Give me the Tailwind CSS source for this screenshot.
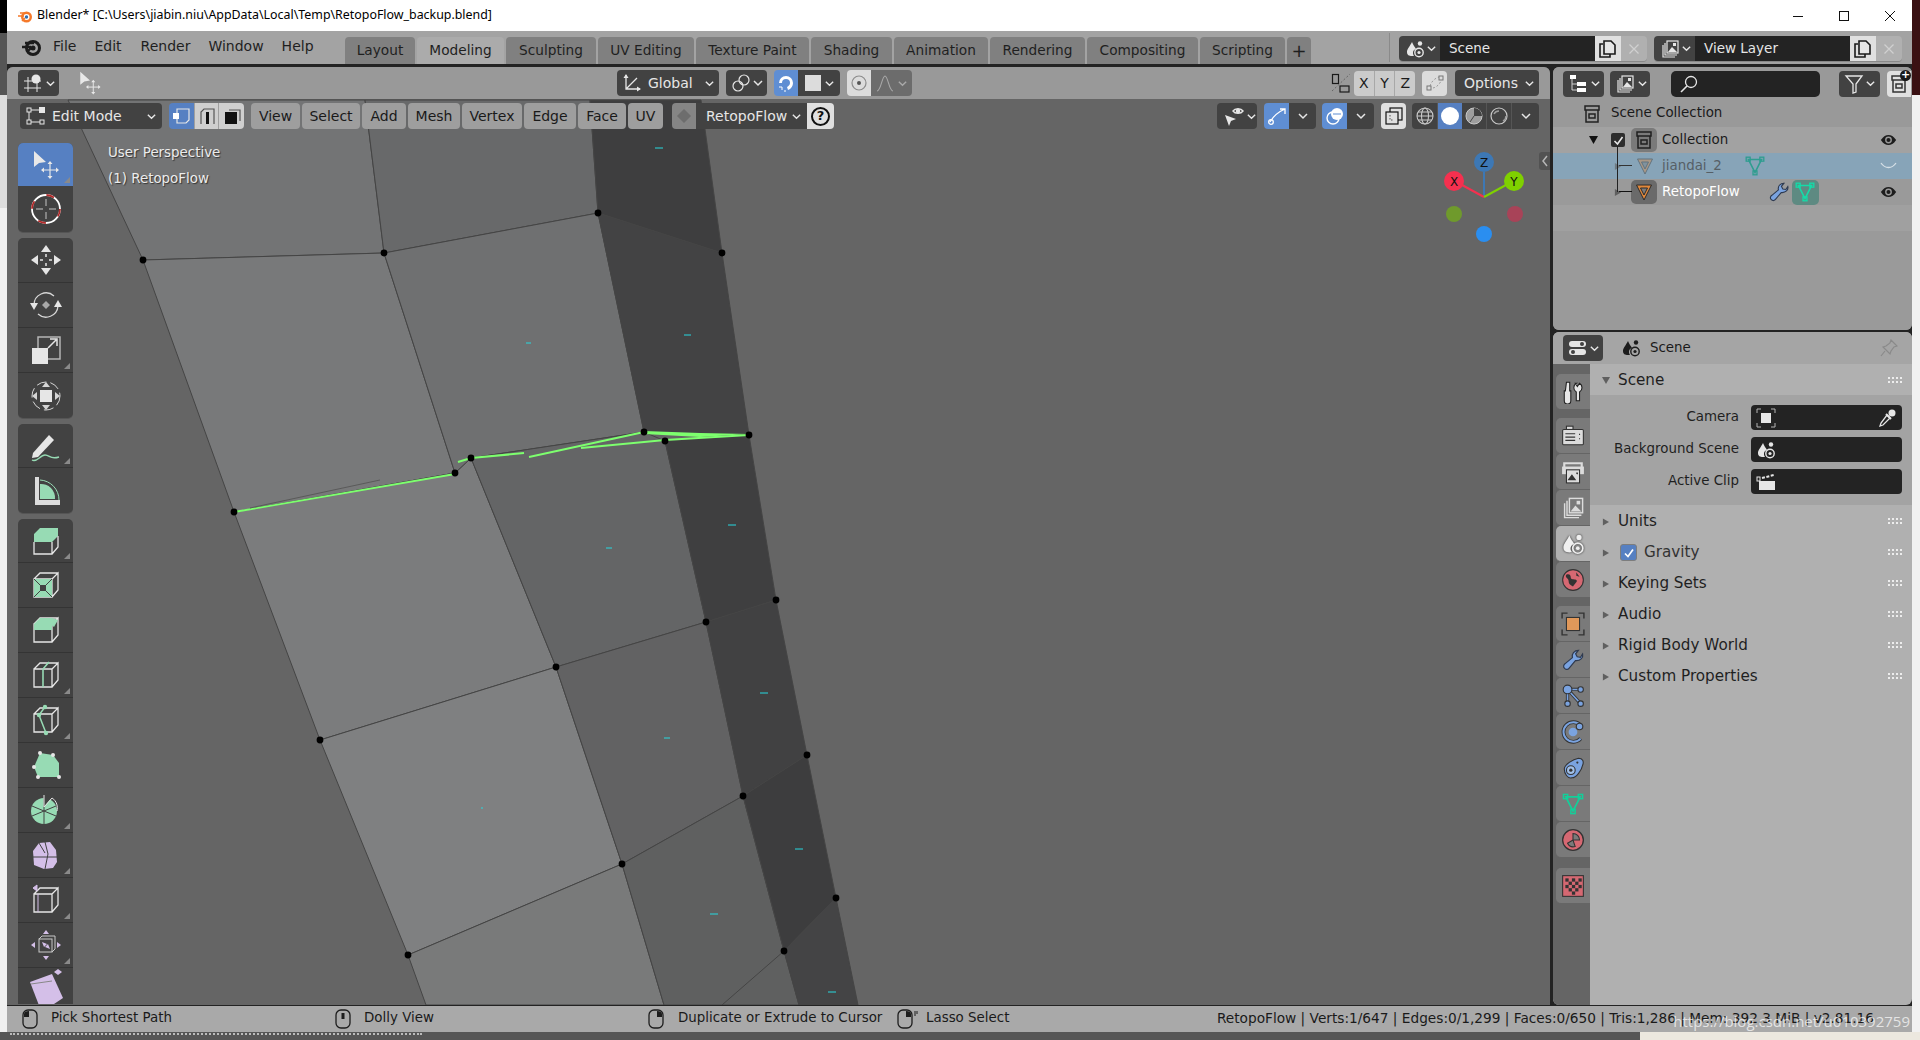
<!DOCTYPE html>
<html lang="en">
<head>
  <meta charset="UTF-8" />
  <title>Blender</title>
  <script src="https://cdn.jsdelivr.net/npm/@tailwindcss/browser@4"></script>
</head>
<body class="w-[1920px] h-[1040px] overflow-hidden bg-[#e9e6df] font-['DejaVu_Sans',sans-serif] text-[13.4px] text-[#1a1a1a]">

  <!-- shared icons -->
  <svg class="hidden">
    <symbol id="chev" viewBox="0 0 12 12"><path d="M2 4l4 4 4-4" fill="none" stroke="currentColor" stroke-width="1.5"/></symbol>
    <symbol id="corner" viewBox="0 0 7 7"><polygon points="7,0 7,7 0,7" fill="#8a8a8a"/></symbol>
    <symbol id="sceneicon" viewBox="0 0 20 20">
      <path d="M7 3C5 7 2 10 2 13c0 3 2 4 5 4 1 0 2-.3 2-.3C7 14 8 11 11 10 10 8 8 6 7 3z" fill="currentColor"/>
      <circle cx="15" cy="4.5" r="2.2" fill="currentColor"/>
      <circle cx="14" cy="13.5" r="4.2" fill="none" stroke="currentColor" stroke-width="1.4"/>
      <circle cx="14" cy="13.5" r="1.6" fill="currentColor"/>
    </symbol>
    <symbol id="layers" viewBox="0 0 20 20">
      <path d="M3 6v12h12" fill="none" stroke="currentColor" stroke-width="1.2"/>
      <path d="M5 4v12h12" fill="none" stroke="currentColor" stroke-width="1.2"/>
      <rect x="7" y="2" width="11" height="12" fill="none" stroke="currentColor" stroke-width="1.2"/>
      <path d="M8 13l4-5 2 2 3 3z" fill="currentColor"/><rect x="13" y="4" width="3" height="3" fill="currentColor"/>
    </symbol>
    <symbol id="copy" viewBox="0 0 20 20">
      <path d="M5 5H2v13h10v-3" fill="none" stroke="#1a1a1a" stroke-width="1.6"/>
      <path d="M6 2h7l4 4v9H6z" fill="#e6e6e6" stroke="#1a1a1a" stroke-width="1.6"/>
    </symbol>
    <symbol id="x" viewBox="0 0 12 12"><path d="M1.5 1.5l9 9M10.5 1.5l-9 9" stroke="currentColor" stroke-width="1.3"/></symbol>
    <symbol id="eye" viewBox="0 0 20 14"><path d="M1 7c3-4.5 6-6 9-6s6 1.5 9 6c-3 4.5-6 6-9 6s-6-1.5-9-6z" fill="#1d1d1d"/><circle cx="10" cy="7" r="4" fill="#9a9a9a"/><circle cx="10" cy="7" r="2.4" fill="#1d1d1d"/></symbol>
    <symbol id="meshicon" viewBox="0 0 20 20">
      <path d="M4 4h12L10 16z" fill="none" stroke="currentColor" stroke-width="1.4"/>
      <g fill="none" stroke="currentColor" stroke-width="1.2"><rect x="2" y="2" width="3.6" height="3.6"/><rect x="14.400" y="2" width="3.6" height="3.6"/><rect x="8.200" y="14.400" width="3.6" height="3.6"/></g>
    </symbol>
    <symbol id="objicon" viewBox="0 0 20 20">
      <path d="M2.5 3h15L10 18z" fill="#e0883c" stroke="#2b2b2b" stroke-width="1"/>
      <path d="M6.500 6h7L10 13z" fill="#7a7a7a" stroke="#2b2b2b" stroke-width="1"/>
    </symbol>
    <symbol id="collicon" viewBox="0 0 20 20">
      <path d="M3 2h14v4H3zM4 6v12h12V6" fill="none" stroke="currentColor" stroke-width="1.5"/>
      <rect x="7" y="10" width="6" height="4" fill="none" stroke="currentColor" stroke-width="1.5"/>
    </symbol>
    <symbol id="wrench" viewBox="0 0 20 20">
      <path d="M3 17c-1.5-1.500-.8-3 .5-4l6-5c-.8-3 1.500-6 5-6l-2.300 2.800 1.300 2.500 2.700.4L18 5c.8 3-2 6-6 5.500l-5 6c-1 1.300-2.500 2-4 .5z" fill="#7aa3e0" stroke="#2f3a4f" stroke-width="1"/>
    </symbol>
    <symbol id="grip" viewBox="0 0 14 7"><g fill="#ededed"><rect x="0" y="0" width="2" height="2"/><rect x="4" y="0" width="2" height="2"/><rect x="8" y="0" width="2" height="2"/><rect x="12" y="0" width="2" height="2"/><rect x="0" y="4" width="2" height="2"/><rect x="4" y="4" width="2" height="2"/><rect x="8" y="4" width="2" height="2"/><rect x="12" y="4" width="2" height="2"/></g></symbol>
    <symbol id="tri" viewBox="0 0 8 8"><polygon points="1,0 8,4 1,8" fill="#5f5f5f"/></symbol>
    <symbol id="cube" viewBox="0 0 32 32"><path d="M4 10h18v18H4zM22 28l6-7V4l-6 6M4 10l6-6h18" fill="none" stroke="#e6e6e6" stroke-width="1.300"/></symbol>
    <symbol id="selectmove" viewBox="0 0 32 32">
      <polygon points="4,2 4,18 9,14 16,13" fill="#e8e8e8"/>
      <path d="M20 14v14M13 21h14" stroke="#e8e8e8" stroke-width="1.200" fill="none"/>
      <path d="M20 12l2.500 3h-5zM20 30l2.500-3h-5zM11 21l3 2.500v-5zM29 21l-3 2.500v-5z" fill="#e8e8e8"/>
    </symbol>
  </svg>

  <div class="flex h-[1032px]">
    <!-- desktop behind the window, left -->
    <div class="w-[7px] flex flex-col">
      <div class="h-[33px] bg-black"></div>
      <div class="h-[62px] bg-[#555555]"></div>
      <div class="h-[113px] bg-[#dddddd]"></div>
      <div class="flex-1 bg-[#f0f0f0]"></div>
    </div>

    <div class="w-[1905px] flex flex-col">
      <!-- title bar -->
      <div class="h-[31px] bg-white flex items-center pl-[10px] text-black">
        <svg class="w-[16px] h-[16px]" viewBox="0 0 16 16"><circle cx="9.500" cy="9" r="5.500" fill="#f5792a"/><circle cx="9.500" cy="9" r="3" fill="#fff"/><circle cx="9.500" cy="9" r="1.700" fill="#2f6fb0"/><path d="M1 8h6M3 5h6M5 13l3-3" stroke="#f5792a" stroke-width="1.600"/></svg>
        <span class="ml-[4px] font-['Noto_Sans',sans-serif] text-[12.4px] whitespace-nowrap">Blender* [C:\Users\jiabin.niu\AppData\Local\Temp\RetopoFlow_backup.blend]</span>
        <div class="ml-auto flex items-center text-[#111111]">
          <svg class="w-[46px] h-[12px]" viewBox="0 0 46 12"><path d="M18 6.500h10" stroke="currentColor" stroke-width="1"/></svg>
          <svg class="w-[46px] h-[12px]" viewBox="0 0 46 12"><rect x="18.500" y="1.500" width="9" height="9" fill="none" stroke="currentColor"/></svg>
          <svg class="w-[46px] h-[12px] mr-[-1px]" viewBox="0 0 46 12"><path d="M18 1l10 10M28 1L18 11" stroke="currentColor"/></svg>
        </div>
      </div>

      <!-- top bar: menus, workspace tabs, scene and view layer -->
      <div class="h-[33px] bg-[#a3a3a3] flex text-[#1f1f1f]">
        <div class="flex items-center w-[338px] shrink-0 pb-[2px] text-[14px]">
          <svg class="w-[22px] h-[20px] ml-[13px] text-[#1c1c1c]" viewBox="0 0 22 20"><circle cx="13" cy="11" r="6.500" fill="none" stroke="currentColor" stroke-width="3"/><circle cx="13" cy="11" r="2.500" fill="currentColor"/><path d="M2 10h9M5 6h9M7 15l4-4" stroke="currentColor" stroke-width="2.400"/></svg>
          <span class="ml-[11px]">File</span>
          <span class="ml-[18px]">Edit</span>
          <span class="ml-[19px]">Render</span>
          <span class="ml-[18px]">Window</span>
          <span class="ml-[18px]">Help</span>
        </div>
        <div class="flex items-end h-full text-[13.7px] gap-[2px]">
          <div class="w-[70px] h-[27px] bg-[#808080] rounded-t-[4px] flex items-center justify-center">Layout</div>
          <div class="w-[87px] h-[27px] bg-[#ababab] rounded-t-[4px] flex items-center justify-center">Modeling</div>
          <div class="w-[90px] h-[27px] bg-[#808080] rounded-t-[4px] flex items-center justify-center">Sculpting</div>
          <div class="w-[96px] h-[27px] bg-[#808080] rounded-t-[4px] flex items-center justify-center">UV Editing</div>
          <div class="w-[113px] h-[27px] bg-[#808080] rounded-t-[4px] flex items-center justify-center">Texture Paint</div>
          <div class="w-[81px] h-[27px] bg-[#808080] rounded-t-[4px] flex items-center justify-center">Shading</div>
          <div class="w-[94px] h-[27px] bg-[#808080] rounded-t-[4px] flex items-center justify-center">Animation</div>
          <div class="w-[95px] h-[27px] bg-[#808080] rounded-t-[4px] flex items-center justify-center">Rendering</div>
          <div class="w-[111px] h-[27px] bg-[#808080] rounded-t-[4px] flex items-center justify-center">Compositing</div>
          <div class="w-[85px] h-[27px] bg-[#808080] rounded-t-[4px] flex items-center justify-center">Scripting</div>
          <div class="w-[24px] h-[27px] bg-[#808080] rounded-t-[4px] flex items-center justify-center text-[18px]">+</div>
        </div>
        <div class="w-[1px] h-[29px] mt-[2px] bg-[#8a8a8a] ml-[78px]"></div>
        <div class="flex h-[25px] mt-[5px] ml-[9px] w-[248px] rounded-[4px] overflow-hidden shadow-[0_1px_0_#888]">
          <div class="w-[41px] bg-[#424242] text-[#e6e6e6] flex items-center pl-[6px]">
            <svg class="w-[20px] h-[20px]"><use href="#sceneicon"/></svg>
            <svg class="w-[11px] h-[11px] ml-[1px]"><use href="#chev"/></svg>
          </div>
          <div class="w-[155px] bg-[#232323] text-[#e6e6e6] flex items-center pl-[9px] text-[13.5px]">Scene</div>
          <div class="w-[26px] bg-[#e0e0e0] flex items-center justify-center"><svg class="w-[20px] h-[20px]"><use href="#copy"/></svg></div>
          <div class="w-[26px] bg-[#b0b0b0] text-[#d0d0d0] flex items-center justify-center"><svg class="w-[12px] h-[12px]"><use href="#x"/></svg></div>
        </div>
        <div class="flex h-[25px] mt-[5px] ml-[7px] w-[248px] rounded-[4px] overflow-hidden shadow-[0_1px_0_#888]">
          <div class="w-[41px] bg-[#424242] text-[#e6e6e6] flex items-center pl-[6px]">
            <svg class="w-[20px] h-[20px]"><use href="#layers"/></svg>
            <svg class="w-[11px] h-[11px] ml-[1px]"><use href="#chev"/></svg>
          </div>
          <div class="w-[155px] bg-[#232323] text-[#e6e6e6] flex items-center pl-[9px] text-[13.5px]">View Layer</div>
          <div class="w-[26px] bg-[#e0e0e0] flex items-center justify-center"><svg class="w-[20px] h-[20px]"><use href="#copy"/></svg></div>
          <div class="w-[26px] bg-[#b0b0b0] text-[#d0d0d0] flex items-center justify-center"><svg class="w-[12px] h-[12px]"><use href="#x"/></svg></div>
        </div>
      </div>

      <!-- editors -->
      <div class="flex-1 min-h-0 bg-[#232323] pt-[3px] flex gap-[3px]">

        <!-- 3D viewport -->
        <div class="w-[1543px] shrink-0 flex flex-col rounded-t-[6px] overflow-hidden bg-[#656565]">
          <!-- tool header -->
          <div class="h-[32px] shrink-0 bg-[#999999] flex items-center relative z-10 text-[#e6e6e6]">
            <div class="ml-[11px] w-[41px] h-[26px] bg-[#424242] rounded-[4px] flex items-center pl-[5px]">
              <svg class="w-[22px] h-[22px]" viewBox="0 0 22 22"><path d="M1 9h17M1 16h17M5 5v15M14 5v15" stroke="#e6e6e6" stroke-width="1" fill="none"/><circle cx="13" cy="7" r="4.500" fill="#e6e6e6"/></svg>
              <svg class="w-[11px] h-[11px]"><use href="#chev"/></svg>
            </div>
            <svg class="ml-[18px] w-[26px] h-[26px]"><use href="#selectmove"/></svg>
            <div class="ml-[514px] w-[102px] h-[26px] bg-[#424242] rounded-[4px] flex items-center pl-[5px]">
              <svg class="w-[20px] h-[20px]" viewBox="0 0 20 20"><path d="M4 2v14h14M4 16L15 5" fill="none" stroke="#e6e6e6" stroke-width="1.300"/><path d="M4 1l-2.500 4h5zM19 16l-4-2.500v5z" fill="#e6e6e6"/></svg>
              <span class="ml-[6px] text-[14px]">Global</span>
              <svg class="ml-auto mr-[4px] w-[11px] h-[11px]"><use href="#chev"/></svg>
            </div>
            <div class="ml-[7px] w-[41px] h-[26px] bg-[#424242] rounded-[4px] flex items-center pl-[5px]">
              <svg class="w-[20px] h-[20px]" viewBox="0 0 20 20"><circle cx="7" cy="13" r="5" fill="none" stroke="#e6e6e6" stroke-width="1.200"/><circle cx="13" cy="7" r="5" fill="none" stroke="#e6e6e6" stroke-width="1.200"/></svg>
              <svg class="w-[12px] h-[12px] ml-[1px]"><use href="#chev"/></svg>
            </div>
            <div class="ml-[7px] w-[66px] h-[26px] rounded-[4px] overflow-hidden flex">
              <div class="w-[24px] bg-[#5f8ed3] flex items-center justify-center">
                <svg class="w-[20px] h-[20px]" viewBox="0 0 20 20"><path d="M3 10a7 7 0 1 1 14 0c0 3-2 6-5 7l-1-3c1-.5 3-2 3-4a4 4 0 0 0-8 0z" fill="#fff"/><path d="M3 14h3v3M8 18h2" stroke="#fff" fill="none"/></svg>
              </div>
              <div class="flex-1 bg-[#424242] flex items-center pl-[7px]">
                <div class="w-[16px] h-[16px] bg-[#dcdcdc]"></div>
                <svg class="w-[11px] h-[11px] ml-[3px]"><use href="#chev"/></svg>
              </div>
            </div>
            <div class="ml-[7px] w-[65px] h-[26px] rounded-[4px] overflow-hidden flex">
              <div class="w-[24px] bg-[#dcdcdc] flex items-center justify-center">
                <svg class="w-[18px] h-[18px]" viewBox="0 0 18 18"><circle cx="9" cy="9" r="7" fill="none" stroke="#8c8c8c" stroke-width="1.200"/><circle cx="9" cy="9" r="2" fill="#555"/></svg>
              </div>
              <div class="flex-1 bg-[#6c6c6c] flex items-center pl-[5px] text-[#a8a8a8]">
                <svg class="w-[18px] h-[20px]" viewBox="0 0 18 20"><path d="M1 18c4 0 5-15 8-15s4 15 8 15" fill="none" stroke="#a8a8a8" stroke-width="1.100"/></svg>
                <svg class="w-[11px] h-[11px] ml-[3px]"><use href="#chev"/></svg>
              </div>
            </div>
            <svg class="ml-[419px] w-[20px] h-[20px]" viewBox="0 0 20 20"><rect x="1.500" y="1.500" width="6" height="9" fill="none" stroke="#1a1a1a" stroke-width="1.200"/><rect x="9" y="13" width="9" height="6" fill="none" stroke="#1a1a1a" stroke-width="1.200"/><path d="M1 18L19 1" stroke="#666" stroke-dasharray="2 2"/></svg>
            <div class="ml-[3px] w-[61px] h-[25px] bg-[#cbcbcb] rounded-[4px] flex text-[#1a1a1a] text-[14px]">
              <span class="flex-1 flex items-center justify-center border-r border-[#a8a8a8]">X</span>
              <span class="flex-1 flex items-center justify-center border-r border-[#a8a8a8]">Y</span>
              <span class="flex-1 flex items-center justify-center">Z</span>
            </div>
            <div class="ml-[7px] w-[25px] h-[25px] bg-[#dcdcdc] rounded-[4px] flex items-center justify-center">
              <svg class="w-[20px] h-[20px]" viewBox="0 0 20 20"><path d="M5 13C6 9 10 5 14 4" fill="none" stroke="#9a9a9a" stroke-dasharray="2 2"/><path d="M8 15c3-.5 6-3 8-7" fill="none" stroke="#9a9a9a" stroke-dasharray="2 2"/><rect x="2" y="13" width="4" height="4" fill="none" stroke="#777"/><rect x="14" y="3" width="4" height="4" fill="none" stroke="#777"/></svg>
            </div>
            <div class="ml-[8px] w-[84px] h-[26px] bg-[#424242] rounded-[4px] flex items-center pl-[9px] text-[14px]">
              Options
              <svg class="ml-auto mr-[4px] w-[11px] h-[11px]"><use href="#chev"/></svg>
            </div>
          </div>

          <!-- viewport canvas -->
          <div class="relative flex-1 min-h-0">
            <!-- mesh, page coordinates -->
            <svg class="absolute inset-0 w-full h-full" viewBox="7 99 1543 906">
              <g stroke="#454545" stroke-width="1">
                <polygon points="68,100 365,100 384,253 143,260" fill="#737475"/>
                <polygon points="143,260 384,253 455,473 234,512" fill="#78797a"/>
                <polygon points="234,512 455,473 471,458 556,667 320,740" fill="#7b7c7d"/>
                <polygon points="320,740 556,667 622,864 408,955" fill="#7f8081"/>
                <polygon points="408,955 622,864 664,1005 426,1005" fill="#797a7a"/>
                <polygon points="365,100 590,100 598,213 384,253" fill="#68696a"/>
                <polygon points="384,253 598,213 644,432 471,458 455,473" fill="#6f7071"/>
                <polygon points="471,458 644,432 665,441 706,622 556,667" fill="#646566"/>
                <polygon points="556,667 706,622 743,796 622,864" fill="#626263"/>
                <polygon points="622,864 743,796 784,951 799,1005 664,1005" fill="#5f6060"/>
                <polygon points="590,100 701,100 722,253 598,213" fill="#3e3e3f"/>
                <polygon points="598,213 722,253 749,435 644,432" fill="#434344"/>
                <polygon points="665,441 749,435 776,600 706,622" fill="#3f3f40"/>
                <polygon points="706,622 776,600 807,755 743,796" fill="#414142"/>
                <polygon points="743,796 807,755 836,898 784,951" fill="#3d3d3e"/>
                <polygon points="784,951 836,898 858,1005 799,1005" fill="#444445"/>
                <path d="M784 951L722 1005" fill="none"/>
              </g>
              <!-- selected edge path -->
              <g stroke="#7dff6e" stroke-width="1.800" fill="none">
                <path d="M234 512L455 474"/>
                <path d="M458 462L471 458L524 453" stroke-width="2.200"/>
                <path d="M529 457L644 432"/>
                <path d="M581 448L665 440L749 435"/>
              </g>
              <polygon points="644,431 700,433 749,434 700,437 644,434" fill="#7dff6e"/>
              <path d="M250 508L380 480" stroke="#5a5a5a" fill="none"/>
              <!-- normals -->
              <g stroke="#27d9e0" stroke-width="1" fill="none">
                <path d="M655 148h8M684 335h7M526 343h5M728 525h8M606 548h6M760 693h8M664 738h6M795 849h8M710 914h8M828 992h8M481 808h2"/>
              </g>
              <g fill="#000">
                <circle cx="143" cy="260" r="3.400"/><circle cx="384" cy="253" r="3.400"/><circle cx="598" cy="213" r="3.400"/><circle cx="722" cy="253" r="3.400"/>
                <circle cx="234" cy="512" r="3.400"/><circle cx="455" cy="473" r="3.400"/><circle cx="471" cy="458" r="3.400"/><circle cx="644" cy="432" r="3.400"/><circle cx="665" cy="441" r="3.400"/><circle cx="749" cy="435" r="3.400"/>
                <circle cx="320" cy="740" r="3.400"/><circle cx="556" cy="667" r="3.400"/><circle cx="706" cy="622" r="3.400"/><circle cx="776" cy="600" r="3.400"/>
                <circle cx="408" cy="955" r="3.400"/><circle cx="622" cy="864" r="3.400"/><circle cx="743" cy="796" r="3.400"/><circle cx="807" cy="755" r="3.400"/>
                <circle cx="784" cy="951" r="3.400"/><circle cx="836" cy="898" r="3.400"/>
              </g>
              <!-- navigation gizmo -->
              <path d="M1484 197V172" stroke="#3d78b5" stroke-width="2"/>
              <path d="M1484 197L1462 185" stroke="#f5304f" stroke-width="2"/>
              <path d="M1484 197L1506 185" stroke="#7fd100" stroke-width="2"/>
              <circle cx="1484" cy="162" r="10" fill="#3d78b5"/>
              <circle cx="1454" cy="181" r="10" fill="#f5304f"/>
              <circle cx="1514" cy="181" r="10" fill="#7fd100"/>
              <circle cx="1454" cy="214" r="8" fill="#6f9a2c"/>
              <circle cx="1515" cy="214" r="8" fill="#a84358"/>
              <circle cx="1484" cy="234" r="8" fill="#2a8ef0"/>
              <g fill="#101010" font-family="DejaVu Sans" font-size="12" text-anchor="middle">
                <text x="1484" y="166.500">Z</text><text x="1454" y="185.500">X</text><text x="1514" y="185.500">Y</text>
              </g>
            </svg>

            <!-- header overlay -->
            <div class="absolute top-[4px] left-[13px] right-[10px] h-[26px] flex text-[#e6e6e6]">
              <div class="w-[142px] bg-[#424242] rounded-[4px] flex items-center pl-[6px] text-[14px]">
                <svg class="w-[20px] h-[20px]" viewBox="0 0 20 20"><rect x="1" y="2" width="4" height="4" fill="none" stroke="#e6e6e6"/><rect x="13" y="1" width="6" height="6" fill="#e6e6e6"/><rect x="1" y="14" width="4" height="4" fill="none" stroke="#e6e6e6"/><rect x="14" y="14" width="4" height="4" fill="none" stroke="#e6e6e6"/><path d="M5 4h8M3 6v8M5 16h9" stroke="#e6e6e6"/></svg>
                <span class="ml-[6px]">Edit Mode</span>
                <svg class="ml-auto mr-[5px] w-[11px] h-[11px]"><use href="#chev"/></svg>
              </div>
              <div class="ml-[7px] w-[75px] rounded-[4px] overflow-hidden flex">
                <div class="w-[25px] bg-[#5680c2] flex items-center justify-center"><svg class="w-[20px] h-[20px]" viewBox="0 0 20 20"><path d="M5 3h12v11l-3 3H5z" fill="none" stroke="#e6e6e6" stroke-width="1.200"/><rect x="1" y="7" width="6" height="6" fill="#fff"/></svg></div>
                <div class="w-[25px] bg-[#cfcfcf] border-x border-[#9f9f9f] flex items-center justify-center"><svg class="w-[20px] h-[20px]" viewBox="0 0 20 20"><path d="M4 18V6l3-3h10v15" fill="none" stroke="#555" stroke-width="1.200"/><rect x="9" y="6" width="3" height="12" fill="#111"/></svg></div>
                <div class="w-[25px] bg-[#cfcfcf] flex items-center justify-center"><svg class="w-[20px] h-[20px]" viewBox="0 0 20 20"><path d="M7 4h11v11" fill="none" stroke="#555" stroke-width="1.200"/><rect x="3" y="6" width="12" height="12" fill="#111"/></svg></div>
              </div>
              <div class="ml-[7px] flex gap-[2px] text-[#1a1a1a] text-[14px]">
                <div class="w-[49px] bg-[#9e9e9e] rounded-[4px] flex items-center justify-center">View</div>
                <div class="w-[58px] bg-[#9e9e9e] rounded-[4px] flex items-center justify-center">Select</div>
                <div class="w-[44px] bg-[#9e9e9e] rounded-[4px] flex items-center justify-center">Add</div>
                <div class="w-[52px] bg-[#9e9e9e] rounded-[4px] flex items-center justify-center">Mesh</div>
                <div class="w-[60px] bg-[#9e9e9e] rounded-[4px] flex items-center justify-center">Vertex</div>
                <div class="w-[52px] bg-[#9e9e9e] rounded-[4px] flex items-center justify-center">Edge</div>
                <div class="w-[48px] bg-[#9e9e9e] rounded-[4px] flex items-center justify-center">Face</div>
                <div class="w-[35px] bg-[#9e9e9e] rounded-[4px] flex items-center justify-center">UV</div>
              </div>
              <div class="ml-[9px] flex w-[162px] rounded-[4px] overflow-hidden">
                <div class="w-[24px] bg-[#858585] flex items-center justify-center"><svg class="w-[16px] h-[16px]" viewBox="0 0 16 16"><polygon points="8,1 15,8 8,15 1,8" fill="#6d6d6d"/></svg></div>
                <div class="w-[111px] bg-[#424242] flex items-center pl-[10px] text-[14px]">RetopoFlow<svg class="ml-auto mr-[5px] w-[11px] h-[11px]"><use href="#chev"/></svg></div>
                <div class="w-[27px] bg-[#e0e0e0] flex items-center justify-center">
                  <span class="w-[19px] h-[19px] rounded-full border-2 border-[#111111] text-[#111111] font-bold text-[13px] flex items-center justify-center">?</span>
                </div>
              </div>
              <div class="ml-[383px] w-[40px] bg-[#424242] rounded-[4px] flex items-center pl-[5px]">
                <svg class="w-[24px] h-[24px]" viewBox="0 0 24 24"><path d="M11 7c2-3 8-3 10 0-2 3-8 3-10 0z" fill="none" stroke="#e6e6e6" stroke-width="1.400"/><circle cx="16" cy="7" r="2.300" fill="#e6e6e6"/><polygon points="3,11 14,15 9,17 7,22" fill="#e6e6e6"/></svg>
                <svg class="w-[11px] h-[11px]"><use href="#chev"/></svg>
              </div>
              <div class="ml-[7px] w-[52px] rounded-[4px] overflow-hidden flex">
                <div class="w-[25px] bg-[#5f8ed3] flex items-center justify-center"><svg class="w-[22px] h-[22px]" viewBox="0 0 22 22"><path d="M4 17C8 10 12 7 19 4M14 4h5v5" fill="none" stroke="#fff" stroke-width="1.300"/><circle cx="5" cy="17" r="2.300" fill="none" stroke="#fff" stroke-width="1.300"/></svg></div>
                <div class="flex-1 bg-[#424242] flex items-center justify-center"><svg class="w-[12px] h-[12px]"><use href="#chev"/></svg></div>
              </div>
              <div class="ml-[6px] w-[52px] rounded-[4px] overflow-hidden flex">
                <div class="w-[25px] bg-[#5f8ed3] flex items-center justify-center"><svg class="w-[22px] h-[22px]" viewBox="0 0 22 22"><circle cx="13" cy="9" r="6" fill="#fff"/><circle cx="9" cy="13" r="6" fill="none" stroke="#fff" stroke-width="1.400"/><path d="M9 9l8 0" stroke="#5f8ed3" stroke-width="1.200"/></svg></div>
                <div class="flex-1 bg-[#424242] flex items-center justify-center"><svg class="w-[12px] h-[12px]"><use href="#chev"/></svg></div>
              </div>
              <div class="ml-[7px] w-[25px] bg-[#e0e0e0] rounded-[4px] flex items-center justify-center">
                <svg class="w-[20px] h-[20px]" viewBox="0 0 20 20"><rect x="6" y="2" width="12" height="12" fill="none" stroke="#111" stroke-width="1.200"/><rect x="2" y="6" width="12" height="12" fill="#e0e0e0" stroke="#111" stroke-width="1.200"/><path d="M6 9v5h4" fill="none" stroke="#555" stroke-dasharray="1.500 1.500"/></svg>
              </div>
              <div class="ml-[6px] w-[127px] rounded-[4px] overflow-hidden flex bg-[#424242]">
                <div class="w-[26px] flex items-center justify-center border-r border-[#555555]"><svg class="w-[20px] h-[20px]" viewBox="0 0 20 20"><g fill="none" stroke="#c9c9c9" stroke-width="1.100"><circle cx="10" cy="10" r="8"/><ellipse cx="10" cy="10" rx="3.500" ry="8"/><path d="M2 10h16M3 6h14M3 14h14"/></g></svg></div>
                <div class="w-[24px] bg-[#5680c2] flex items-center justify-center"><div class="w-[18px] h-[18px] rounded-full bg-white"></div></div>
                <div class="w-[25px] flex items-center justify-center border-r border-[#555555]"><svg class="w-[20px] h-[20px]" viewBox="0 0 20 20"><circle cx="10" cy="10" r="8" fill="#9e9e9e" stroke="#c9c9c9"/><path d="M10 2v8h8a8 8 0 0 0-8-8z" fill="#424242"/><path d="M10 10l-4 6" stroke="#424242"/></svg></div>
                <div class="w-[25px] flex items-center justify-center border-r border-[#555555]"><svg class="w-[20px] h-[20px]" viewBox="0 0 20 20"><circle cx="10" cy="10" r="8" fill="none" stroke="#c9c9c9" stroke-width="1.200"/><path d="M5 8c1-2 3-3 5-3M14 15c2-1 3-3 3-5" fill="none" stroke="#9e9e9e" stroke-width="1.500"/></svg></div>
                <div class="flex-1 flex items-center justify-center"><svg class="w-[12px] h-[12px]"><use href="#chev"/></svg></div>
              </div>
            </div>

            <div class="absolute top-[41px] left-[101px] text-[#ececec] [text-shadow:1px_1px_1px_#333] leading-[26px]">
              <div>User Perspective</div>
              <div>(1) RetopoFlow</div>
            </div>

            <div class="absolute top-[53px] right-0 w-[11px] h-[18px] bg-[#525252] rounded-l-[3px] flex items-center justify-center">
              <svg class="w-[8px] h-[12px]" viewBox="0 0 8 12"><path d="M6 1L2 6l4 5" fill="none" stroke="#b5b5b5" stroke-width="1.500"/></svg>
            </div>

            <!-- tool column -->
            <div class="absolute top-[44px] left-[11px] w-[55px] flex flex-col gap-[6px]">
              <div class="rounded-[5px] overflow-hidden bg-[#424242] shadow-[0_1px_0_#555]">
                <div class="relative h-[43px] bg-[#5680c2] flex items-center justify-center">
                  <svg class="w-[32px] h-[32px]"><use href="#selectmove"/></svg>
                  <svg class="absolute right-[3px] bottom-[3px] w-[6px] h-[6px]"><use href="#corner"/></svg>
                </div>
                <div class="h-[46px] flex items-center justify-center">
                  <svg class="w-[32px] h-[32px]" viewBox="0 0 32 32"><circle cx="16" cy="16" r="14" fill="none" stroke="#fff" stroke-width="1.800"/><circle cx="16" cy="16" r="14" fill="none" stroke="#b02a2a" stroke-width="1.800" stroke-dasharray="8 14"/><path d="M16 6v7M16 19v7M6 16h7M19 16h7" stroke="#9a9a9a" stroke-width="1.500"/></svg>
                </div>
              </div>
              <div class="rounded-[5px] overflow-hidden bg-[#424242] divide-y divide-[#343434] shadow-[0_1px_0_#555]">
                <div class="h-[45px] flex items-center justify-center"><svg class="w-[32px] h-[32px]" viewBox="0 0 32 32"><g fill="#e6e6e6"><polygon points="16,1 21,8 11,8"/><polygon points="16,31 21,24 11,24"/><polygon points="1,16 8,11 8,21"/><polygon points="31,16 24,11 24,21"/></g><path d="M16 10v3M16 19v3M10 16h3M19 16h3" stroke="#bdbdbd" stroke-width="2"/></svg></div>
                <div class="h-[45px] flex items-center justify-center"><svg class="w-[32px] h-[32px]" viewBox="0 0 32 32"><path d="M4 16A12 12 0 0 1 24 7M28 17A12 12 0 0 1 8 25" fill="none" stroke="#d5d5d5" stroke-width="1.300"/><polygon points="16,12 20,16 16,20 12,16" fill="#a8a8a8"/><polygon points="28,11 32,18 24,18" fill="#e6e6e6"/><polygon points="4,21 0,14 8,14" fill="#e6e6e6"/></svg></div>
                <div class="relative h-[45px] flex items-center justify-center"><svg class="w-[32px] h-[32px]" viewBox="0 0 32 32"><path d="M8 14V3h22v22H18" fill="none" stroke="#b5b5b5" stroke-width="1.500"/><rect x="2" y="14" width="16" height="16" fill="#e6e6e6"/><path d="M18 14l8-8M20 5h7v7" fill="none" stroke="#e6e6e6" stroke-width="1.500"/></svg><svg class="absolute right-[3px] bottom-[3px] w-[6px] h-[6px]"><use href="#corner"/></svg></div>
                <div class="h-[45px] flex items-center justify-center"><svg class="w-[32px] h-[32px]" viewBox="0 0 32 32"><circle cx="16" cy="16" r="14" fill="none" stroke="#d5d5d5" stroke-width="1" stroke-dasharray="10 4"/><rect x="10" y="10" width="12" height="12" fill="#e6e6e6"/><g fill="#d5d5d5"><polygon points="16,2 20,7 12,7"/><polygon points="16,30 20,25 12,25"/><polygon points="2,16 7,12 7,20"/><polygon points="30,16 25,12 25,20"/></g></svg></div>
              </div>
              <div class="rounded-[5px] overflow-hidden bg-[#424242] divide-y divide-[#343434] shadow-[0_1px_0_#555]">
                <div class="relative h-[44px] flex items-center justify-center"><svg class="w-[32px] h-[32px]" viewBox="0 0 32 32"><path d="M3 23L19 5l5 5L8 27l-6 1z" fill="#e6e6e6"/><path d="M2 30c5 3 8-5 13-5s5 5 14 2" fill="none" stroke="#97dbb4" stroke-width="1.400"/></svg><svg class="absolute right-[3px] bottom-[3px] w-[6px] h-[6px]"><use href="#corner"/></svg></div>
                <div class="h-[45px] flex items-center justify-center"><svg class="w-[32px] h-[32px]" viewBox="0 0 32 32"><path d="M10 24V9a14 14 0 0 1 15 15z" fill="#97dbb4"/><path d="M5 2h4v23h21v5H5z" fill="#dcdcdc"/><path d="M10 5a20 20 0 0 1 19 20" fill="none" stroke="#97dbb4"/></svg></div>
              </div>
              <div class="rounded-t-[5px] overflow-hidden bg-[#424242] divide-y divide-[#343434]">
                <div class="relative h-[44px] flex items-center justify-center"><svg class="w-[32px] h-[32px]" viewBox="0 0 32 32"><path d="M4 9l6-6h18l-6 6zM4 9h18v8H4zM22 9l6-6v8l-6 6z" fill="#97dbb4"/><path d="M4 17v12h18V17M22 29l6-7V11" fill="none" stroke="#e6e6e6" stroke-width="1.300"/></svg><svg class="absolute right-[3px] bottom-[3px] w-[6px] h-[6px]"><use href="#corner"/></svg></div>
                <div class="h-[45px] flex items-center justify-center"><svg class="w-[32px] h-[32px]" viewBox="0 0 32 32"><use href="#cube"/><path d="M4 10h18v18H4zM10 16v6h6v-6z" fill="#97dbb4" fill-rule="evenodd"/><path d="M4 10l6 6M22 10l-6 6M4 28l6-6M22 28l-6-6" stroke="#424242"/></svg></div>
                <div class="h-[45px] flex items-center justify-center"><svg class="w-[32px] h-[32px]" viewBox="0 0 32 32"><use href="#cube"/><path d="M4 10l6-6h12v6 l0 6H4z" fill="#97dbb4"/><path d="M22 4l6 2-4 7-4-3z" fill="#97dbb4"/></svg></div>
                <div class="relative h-[45px] flex items-center justify-center"><svg class="w-[32px] h-[32px]" viewBox="0 0 32 32"><use href="#cube"/><path d="M13 10v18M13 10l6-7" stroke="#97dbb4" stroke-width="1.600" fill="none"/></svg><svg class="absolute right-[3px] bottom-[3px] w-[6px] h-[6px]"><use href="#corner"/></svg></div>
                <div class="relative h-[45px] flex items-center justify-center"><svg class="w-[32px] h-[32px]" viewBox="0 0 32 32"><use href="#cube"/><path d="M15 3l-6 8 7 18" stroke="#97dbb4" stroke-width="1.500" fill="none"/><circle cx="15" cy="3" r="2.200" fill="#97dbb4"/><circle cx="9" cy="11" r="2.200" fill="#97dbb4"/><circle cx="16" cy="29" r="2.200" fill="#97dbb4"/></svg><svg class="absolute right-[3px] bottom-[3px] w-[6px] h-[6px]"><use href="#corner"/></svg></div>
                <div class="h-[45px] flex items-center justify-center"><svg class="w-[32px] h-[32px]" viewBox="0 0 32 32"><polygon points="10,4 23,6 29,14 29,28 8,28 4,18" fill="#97dbb4"/><g fill="#e6e6e6"><circle cx="10" cy="4" r="2"/><circle cx="23" cy="6" r="2"/><circle cx="29" cy="28" r="2"/><circle cx="8" cy="28" r="2"/><circle cx="4" cy="18" r="2"/></g></svg></div>
                <div class="relative h-[45px] flex items-center justify-center"><svg class="w-[32px] h-[32px]" viewBox="0 0 32 32"><circle cx="14" cy="17" r="13" fill="#97dbb4"/><path d="M14 4v26M2 12l24 10M2 22l24-10" stroke="#424242" stroke-width="1"/><path d="M14 1v12l8-10" fill="#424242"/><path d="M14 1v12l8-9M22 4c5 3 6 9 5 13" fill="none" stroke="#e6e6e6"/></svg><svg class="absolute right-[3px] bottom-[3px] w-[6px] h-[6px]"><use href="#corner"/></svg></div>
                <div class="relative h-[45px] flex items-center justify-center"><svg class="w-[32px] h-[32px]" viewBox="0 0 32 32"><path d="M9 4l11-1 6 8 1 12-4 6-9 1-10-4-1-14z" fill="#d4bfe8"/><path d="M3 18h24M15 3l3 12-3 15M9 4l6 10" stroke="#424242" stroke-width="1" fill="none"/></svg><svg class="absolute right-[3px] bottom-[3px] w-[6px] h-[6px]"><use href="#corner"/></svg></div>
                <div class="relative h-[45px] flex items-center justify-center"><svg class="w-[32px] h-[32px]" viewBox="0 0 32 32"><use href="#cube"/><path d="M3 4l4-3v6zM8 28V10" fill="#d4bfe8" stroke="#d4bfe8"/></svg><svg class="absolute right-[3px] bottom-[3px] w-[6px] h-[6px]"><use href="#corner"/></svg></div>
                <div class="relative h-[45px] flex items-center justify-center"><svg class="w-[32px] h-[32px]" viewBox="0 0 32 32"><rect x="9" y="10" width="13" height="13" fill="none" stroke="#c9c9c9"/><path d="M9 10l3-3h13v13l-3 3" fill="none" stroke="#c9c9c9"/><g fill="#d4bfe8"><polygon points="16,1 19,5 13,5"/><polygon points="16,31 19,27 13,27"/><polygon points="1,16 5,13 5,19"/><polygon points="31,16 27,13 27,19"/><polygon points="12,13 17,15 14,18"/><polygon points="20,20 15,18 18,15"/></g></svg><svg class="absolute right-[3px] bottom-[3px] w-[6px] h-[6px]"><use href="#corner"/></svg></div>
                <div class="h-[36px] overflow-hidden flex items-start justify-center"><svg class="w-[36px] h-[36px]" viewBox="0 0 36 36"><polygon points="2,14 24,6 35,30 20,40 12,40" fill="#d4bfe8"/><path d="M3 16l21-3" stroke="#888" fill="none"/><polygon points="30,1 34,4 30,7 26,4" fill="#d4bfe8"/></svg></div>
              </div>
            </div>
          </div>
        </div>

        <!-- right column -->
        <div class="w-[359px] flex flex-col gap-[2px] min-h-0">
          <!-- outliner -->
          <div class="h-[263px] shrink-0 bg-[#9a9a9a] rounded-[6px] overflow-hidden flex flex-col relative">
            <div class="h-[33px] shrink-0 bg-[#999999] flex items-center text-[#e6e6e6]">
              <div class="ml-[10px] w-[41px] h-[26px] bg-[#424242] rounded-[4px] flex items-center pl-[5px]">
                <svg class="w-[20px] h-[20px]" viewBox="0 0 20 20"><rect x="2" y="1" width="6" height="4" fill="#fff"/><rect x="9" y="8" width="9" height="4" fill="#fff"/><rect x="9" y="14" width="9" height="4" fill="#fff"/><path d="M4 5v11h5M4 10h5" stroke="#d0d0d0" fill="none"/></svg>
                <svg class="w-[11px] h-[11px] ml-[2px]"><use href="#chev"/></svg>
              </div>
              <div class="ml-[6px] w-[40px] h-[26px] bg-[#424242] rounded-[4px] flex items-center pl-[5px]">
                <svg class="w-[20px] h-[20px]"><use href="#layers"/></svg>
                <svg class="w-[11px] h-[11px] ml-[2px]"><use href="#chev"/></svg>
              </div>
              <div class="ml-[21px] w-[149px] h-[26px] bg-[#232323] rounded-[5px] flex items-center pl-[9px]">
                <svg class="w-[18px] h-[18px]" viewBox="0 0 18 18"><circle cx="11" cy="7" r="5.500" fill="none" stroke="#e6e6e6" stroke-width="1.300"/><path d="M7 11l-6 6" stroke="#e6e6e6" stroke-width="1.600"/></svg>
              </div>
              <div class="ml-[19px] w-[41px] h-[26px] bg-[#424242] rounded-[4px] flex items-center pl-[5px]">
                <svg class="w-[20px] h-[22px]" viewBox="0 0 20 22"><path d="M2 3h16l-6 8v8l-3 1V11z" fill="none" stroke="#e6e6e6" stroke-width="1.300"/></svg>
                <svg class="w-[11px] h-[11px] ml-[1px]"><use href="#chev"/></svg>
              </div>
              <div class="ml-[7px] w-[24px] h-[26px] bg-[#e0e0e0] rounded-l-[4px] flex items-center justify-center relative text-[#333333]">
                <svg class="w-[20px] h-[20px]"><use href="#collicon"/></svg>
                <span class="absolute -top-[1px] right-[0px] w-[11px] h-[11px] rounded-full bg-[#1a1a1a] text-white text-[11px] leading-[10px] text-center font-bold">+</span>
              </div>
            </div>
            <div class="h-[27px] shrink-0 flex items-center bg-[#999999] pl-[29px]">
              <svg class="w-[20px] h-[20px] text-[#222222]"><use href="#collicon"/></svg>
              <span class="ml-[9px]">Scene Collection</span>
            </div>
            <div class="h-[26px] shrink-0 flex items-center bg-[#a2a2a2] relative">
              <svg class="ml-[36px] w-[9px] h-[8px]" viewBox="0 0 9 8"><polygon points="0,0 9,0 4.500,8" fill="#111"/></svg>
              <div class="ml-[13px] w-[14px] h-[14px] bg-[#2d2d2d] rounded-[2px] flex items-center justify-center"><svg class="w-[11px] h-[11px]" viewBox="0 0 11 11"><path d="M1.500 6l3 3 5-7" fill="none" stroke="#e6e6e6" stroke-width="1.600"/></svg></div>
              <div class="ml-[6px] w-[26px] h-[24px] rounded-[5px] bg-[#7a7a7a] flex items-center justify-center text-[#1f1f1f]"><svg class="w-[20px] h-[20px]"><use href="#collicon"/></svg></div>
              <span class="ml-[5px]">Collection</span>
              <svg class="absolute right-[15px] w-[17px] h-[12px]"><use href="#eye"/></svg>
            </div>
            <div class="h-[26px] shrink-0 flex items-center bg-[#87a4b8] relative text-[#565f66]">
              <svg class="ml-[61px] w-[7px] h-[7px] opacity-60"><use href="#tri"/></svg>
              <div class="absolute left-[66px] top-[12px] w-[13px] h-[1px] bg-[#333333]"></div>
              <svg class="ml-[14px] w-[20px] h-[20px] opacity-40"><use href="#objicon"/></svg>
              <span class="ml-[7px]">jiandai_2</span>
              <svg class="ml-[22px] w-[22px] h-[24px] text-[#2f9d90]"><use href="#meshicon"/></svg>
              <svg class="absolute right-[15px] w-[17px] h-[8px]" viewBox="0 0 17 8"><path d="M1 1c4 6 11 6 15 0" fill="none" stroke="#d5dfe6" stroke-width="1.300"/></svg>
            </div>
            <div class="h-[26px] shrink-0 flex items-center bg-[#9a9a9a] relative text-white">
              <svg class="ml-[61px] w-[7px] h-[7px]"><use href="#tri"/></svg>
              <div class="absolute left-[66px] top-[12px] w-[13px] h-[1px] bg-[#111111]"></div>
              <div class="ml-[10px] w-[26px] h-[24px] rounded-[5px] bg-[#6a6a6a] flex items-center justify-center"><svg class="w-[20px] h-[20px]"><use href="#objicon"/></svg></div>
              <span class="ml-[5px]">RetopoFlow</span>
              <svg class="ml-[28px] w-[22px] h-[22px]"><use href="#wrench"/></svg>
              <div class="ml-[2px] w-[27px] h-[25px] rounded-[5px] bg-[#5e8a82] flex items-center justify-center text-[#14dca8]"><svg class="w-[22px] h-[22px]"><use href="#meshicon"/></svg></div>
              <svg class="absolute right-[15px] w-[17px] h-[12px]"><use href="#eye"/></svg>
            </div>
            <div class="h-[26px] shrink-0 bg-[#a0a0a0]"></div>
            <div class="flex-1 bg-[#9a9a9a]"></div>
            <!-- hierarchy line over the rows -->
            <div class="absolute left-[64px] top-[79px] w-[1px] h-[46px] bg-[#222222]"></div>
          </div>

          <!-- properties -->
          <div class="flex-1 min-h-0 bg-[#b0b0b0] rounded-[6px] overflow-hidden flex flex-col">
            <div class="h-[32px] shrink-0 bg-[#a5a5a5] flex items-center">
              <div class="ml-[10px] w-[40px] h-[26px] bg-[#424242] rounded-[4px] flex items-center pl-[5px] text-[#e6e6e6]">
                <svg class="w-[20px] h-[20px]" viewBox="0 0 20 20"><rect x="1" y="3" width="17" height="6" rx="3" fill="#e6e6e6"/><rect x="1" y="11" width="17" height="6" rx="3" fill="#e6e6e6"/><circle cx="14" cy="6" r="2" fill="#424242"/><circle cx="5" cy="14" r="2" fill="#424242"/></svg>
                <svg class="w-[11px] h-[11px] ml-[1px]"><use href="#chev"/></svg>
              </div>
              <svg class="ml-[18px] w-[20px] h-[20px] text-[#1d1d1d]"><use href="#sceneicon"/></svg>
              <span class="ml-[9px]">Scene</span>
              <svg class="ml-auto mr-[14px] w-[18px] h-[18px]" viewBox="0 0 18 18"><path d="M11 1l6 6-3 1-3 4-1 3-7-7 3-1 4-3zM5 12l-4 5" fill="none" stroke="#8a8a8a" stroke-width="1.200"/></svg>
            </div>
            <div class="flex-1 min-h-0 flex">
              <!-- tabs -->
              <div class="w-[37px] shrink-0 bg-[#656565] pl-[3px] pt-[10px] flex flex-col">
                <div class="h-[36px] bg-[#7a7a7a] border-b border-[#656565] rounded-l-[5px] flex items-center justify-center"><svg class="w-[24px] h-[24px]" viewBox="0 0 22 22"><path d="M5 2h3v8h1v9a3 3 0 0 1-6 0v-9h1z" fill="#e6e6e6" stroke="#222"/><path d="M13 3l2 3 2-3c3 2 3 6 0 8v8h-3v-8c-3-2-3-6 0-8z" fill="#e6e6e6" stroke="#222"/></svg></div>
                <div class="h-[36px] bg-[#7a7a7a] border-b border-[#656565] rounded-l-[5px] mt-[8px] flex items-center justify-center"><svg class="w-[24px] h-[24px]" viewBox="0 0 22 22"><rect x="1.500" y="5" width="19" height="14" rx="1" fill="#dcdcdc" stroke="#333"/><rect x="5" y="2" width="6" height="3" fill="#dcdcdc" stroke="#333"/><path d="M4 9h9M4 12h9M4 15h9M17 9v1M17 13v1" stroke="#333"/></svg></div>
                <div class="h-[36px] bg-[#7a7a7a] border-b border-[#656565] rounded-l-[5px] flex items-center justify-center"><svg class="w-[24px] h-[24px]" viewBox="0 0 22 22"><path d="M3 8V3h16v5" fill="none" stroke="#dcdcdc" stroke-width="2"/><rect x="1" y="6" width="20" height="7" fill="#dcdcdc"/><rect x="5" y="9" width="12" height="12" fill="#dcdcdc" stroke="#333"/><path d="M7 18l3-4 3 4zM14 12h1v1" fill="#333" stroke="#333"/></svg></div>
                <div class="h-[36px] bg-[#7a7a7a] border-b border-[#656565] rounded-l-[5px] flex items-center justify-center text-[#dcdcdc]"><svg class="w-[24px] h-[24px]"><use href="#layers"/></svg></div>
                <div class="h-[36px] bg-[#b0b0b0] border-b border-[#656565] rounded-l-[5px] flex items-center justify-center text-[#f0f0f0]"><svg class="w-[24px] h-[24px] drop-shadow-[0_0_1px_#222]"><use href="#sceneicon"/></svg></div>
                <div class="h-[36px] bg-[#7a7a7a] border-b border-[#656565] rounded-l-[5px] flex items-center justify-center"><svg class="w-[24px] h-[24px]" viewBox="0 0 22 22"><circle cx="11" cy="11" r="9.500" fill="#d56872" stroke="#333"/><path d="M5 6c3-1 4 1 4 3s3 1 5 2-2 4-3 6c-2-1-4-2-4-5S3 9 5 6zM14 4l3 4-3-1z" fill="#333"/></svg></div>
                <div class="h-[36px] bg-[#7a7a7a] border-b border-[#656565] rounded-l-[5px] mt-[8px] flex items-center justify-center"><svg class="w-[24px] h-[24px]" viewBox="0 0 22 22"><rect x="5" y="5" width="12" height="12" fill="#e0985a" stroke="#333"/><path d="M1 6V1h5M16 1h5v5M21 16v5h-5M6 21H1v-5" fill="none" stroke="#333" stroke-width="1.300"/></svg></div>
                <div class="h-[36px] bg-[#7a7a7a] border-b border-[#656565] rounded-l-[5px] flex items-center justify-center"><svg class="w-[24px] h-[24px]"><use href="#wrench"/></svg></div>
                <div class="h-[36px] bg-[#7a7a7a] border-b border-[#656565] rounded-l-[5px] flex items-center justify-center"><svg class="w-[24px] h-[24px]" viewBox="0 0 22 22"><path d="M6 5l12 0M6 5v13M6 5l12 13" stroke="#333" stroke-width="3"/><path d="M6 5l12 0M6 5v13M6 5l12 13" stroke="#7aa3e0" stroke-width="1.400"/><circle cx="6" cy="5" r="4" fill="#7aa3e0" stroke="#333"/><circle cx="18" cy="5" r="2.500" fill="#7aa3e0" stroke="#333"/><circle cx="6" cy="18" r="2.500" fill="#7aa3e0" stroke="#333"/><circle cx="18" cy="18" r="2.500" fill="#7aa3e0" stroke="#333"/></svg></div>
                <div class="h-[36px] bg-[#7a7a7a] border-b border-[#656565] rounded-l-[5px] flex items-center justify-center"><svg class="w-[24px] h-[24px]" viewBox="0 0 22 22"><path d="M18 17a9 9 0 1 1 0-12" fill="none" stroke="#333" stroke-width="3.500"/><path d="M18 17a9 9 0 1 1 0-12" fill="none" stroke="#7aa3e0" stroke-width="1.800"/><circle cx="11" cy="11" r="4" fill="#7aa3e0"/><circle cx="17" cy="6" r="3" fill="#7aa3e0" stroke="#333"/></svg></div>
                <div class="h-[36px] bg-[#7a7a7a] border-b border-[#656565] rounded-l-[5px] flex items-center justify-center"><svg class="w-[24px] h-[24px]" viewBox="0 0 22 22"><path d="M3 12c0-4 8-9 13-10 4 0 5 3 4 6-1 5-6 12-10 12-4 1-7-4-7-8z" fill="#7aa3e0" stroke="#333"/><circle cx="9" cy="13" r="4" fill="#a0bfe8" stroke="#333"/><circle cx="9" cy="13" r="1.500" fill="#333"/><circle cx="15" cy="6" r="1" fill="#333"/></svg></div>
                <div class="h-[36px] bg-[#7a7a7a] border-b border-[#656565] rounded-l-[5px] flex items-center justify-center text-[#12d09a]"><svg class="w-[24px] h-[24px]"><use href="#meshicon"/></svg></div>
                <div class="h-[36px] bg-[#7a7a7a] border-b border-[#656565] rounded-l-[5px] flex items-center justify-center"><svg class="w-[24px] h-[24px]" viewBox="0 0 22 22"><circle cx="11" cy="11" r="9.500" fill="#d56872" stroke="#333" stroke-width="1.200"/><path d="M11 11V5a6 6 0 0 1 6 6zM11 11l-5 3a6 6 0 0 0 7 3z" fill="#7a7a7a" stroke="#333"/></svg></div>
                <div class="h-[36px] bg-[#7a7a7a] border-b border-[#656565] rounded-l-[5px] mt-[10px] flex items-center justify-center"><svg class="w-[24px] h-[24px]" viewBox="0 0 22 22"><rect x="1.500" y="1.500" width="19" height="19" fill="#d56872" stroke="#333"/><g fill="#333"><rect x="4" y="4" width="3" height="3"/><rect x="10" y="4" width="3" height="3"/><rect x="16" y="4" width="3" height="3"/><rect x="7" y="7" width="3" height="3"/><rect x="13" y="7" width="3" height="3"/><rect x="4" y="10" width="3" height="3"/><rect x="10" y="10" width="3" height="3"/><rect x="16" y="10" width="3" height="3"/><rect x="7" y="13" width="3" height="3"/><rect x="13" y="13" width="3" height="3"/><rect x="10" y="16" width="3" height="3"/></g></svg></div>
              </div>

              <!-- panels -->
              <div class="flex-1 min-w-0 flex flex-col text-[15.2px] text-[#1f1f1f]">
                <div class="h-[31px] flex items-center pl-[12px] pr-[10px] pt-[1px]">
                  <svg class="w-[8px] h-[7px]" viewBox="0 0 8 7"><polygon points="0,0 8,0 4,7" fill="#5f5f5f"/></svg>
                  <span class="ml-[8px]">Scene</span>
                  <svg class="ml-auto w-[14px] h-[7px]"><use href="#grip"/></svg>
                </div>
                <div class="h-[110px] bg-[#a3a3a3] pt-[10px] pr-[10px] flex flex-col gap-[7px] text-[13.4px]">
                  <div class="flex items-center h-[25px]">
                    <span class="w-[149px] text-right">Camera</span>
                    <div class="ml-[12px] flex-1 h-full bg-[#232323] rounded-[4px] flex items-center px-[5px]">
                      <svg class="w-[20px] h-[20px]" viewBox="0 0 20 20"><rect x="5" y="5" width="10" height="10" fill="#e6e6e6"/><path d="M1 5V1h4M15 1h4v4M19 15v4h-4M5 19H1v-4" fill="none" stroke="#b5b5b5"/></svg>
                      <svg class="ml-auto w-[20px] h-[20px]" viewBox="0 0 20 20"><circle cx="15" cy="5" r="3.500" fill="#e6e6e6"/><path d="M10 7l3 3-7 7-3 1 1-3z" fill="none" stroke="#e6e6e6" stroke-width="1.300"/><path d="M9 6l5 5" stroke="#e6e6e6" stroke-width="2"/></svg>
                    </div>
                  </div>
                  <div class="flex items-center h-[25px]">
                    <span class="w-[149px] text-right whitespace-nowrap">Background Scene</span>
                    <div class="ml-[12px] flex-1 h-full bg-[#232323] rounded-[4px] flex items-center px-[5px] text-[#e6e6e6]"><svg class="w-[20px] h-[20px]"><use href="#sceneicon"/></svg></div>
                  </div>
                  <div class="flex items-center h-[25px]">
                    <span class="w-[149px] text-right">Active Clip</span>
                    <div class="ml-[12px] flex-1 h-full bg-[#232323] rounded-[4px] flex items-center px-[5px]">
                      <svg class="w-[20px] h-[20px]" viewBox="0 0 20 20"><rect x="3" y="9" width="16" height="9" fill="#e6e6e6"/><rect x="1" y="5" width="3" height="4" fill="none" stroke="#e6e6e6"/><path d="M6 6l12-3" stroke="#e6e6e6" stroke-width="2" stroke-dasharray="3 1.500"/></svg>
                    </div>
                  </div>
                </div>
                <div class="h-[31px] mt-[1px] flex items-center pl-[12px] pr-[10px]"><svg class="w-[7px] h-[8px]"><use href="#tri"/></svg><span class="ml-[9px]">Units</span><svg class="ml-auto w-[14px] h-[7px]"><use href="#grip"/></svg></div>
                <div class="h-[31px] flex items-center pl-[12px] pr-[10px]"><svg class="w-[7px] h-[8px]"><use href="#tri"/></svg>
                  <div class="ml-[11px] w-[17px] h-[17px] bg-[#5680c2] rounded-[3px] border border-[#7d7d7d] flex items-center justify-center"><svg class="w-[12px] h-[12px]" viewBox="0 0 12 12"><path d="M2 6.500l3 3 5-7" fill="none" stroke="#fff" stroke-width="1.700"/></svg></div>
                  <span class="ml-[7px] text-[#333333]">Gravity</span><svg class="ml-auto w-[14px] h-[7px]"><use href="#grip"/></svg></div>
                <div class="h-[31px] flex items-center pl-[12px] pr-[10px]"><svg class="w-[7px] h-[8px]"><use href="#tri"/></svg><span class="ml-[9px]">Keying Sets</span><svg class="ml-auto w-[14px] h-[7px]"><use href="#grip"/></svg></div>
                <div class="h-[31px] flex items-center pl-[12px] pr-[10px]"><svg class="w-[7px] h-[8px]"><use href="#tri"/></svg><span class="ml-[9px]">Audio</span><svg class="ml-auto w-[14px] h-[7px]"><use href="#grip"/></svg></div>
                <div class="h-[31px] flex items-center pl-[12px] pr-[10px]"><svg class="w-[7px] h-[8px]"><use href="#tri"/></svg><span class="ml-[9px]">Rigid Body World</span><svg class="ml-auto w-[14px] h-[7px]"><use href="#grip"/></svg></div>
                <div class="h-[31px] flex items-center pl-[12px] pr-[10px]"><svg class="w-[7px] h-[8px]"><use href="#tri"/></svg><span class="ml-[9px]">Custom Properties</span><svg class="ml-auto w-[14px] h-[7px]"><use href="#grip"/></svg></div>
              </div>
            </div>
          </div>
        </div>
      </div>

      <!-- status bar -->
      <div class="h-[27px] shrink-0 bg-[#a9a9a9] flex items-center relative border-t border-[#232323] pb-[1px]">
        <svg class="ml-[15px] w-[16px] h-[20px]" viewBox="0 0 16 20"><rect x="1" y="1" width="14" height="18" rx="5" fill="none" stroke="#1d1d1d" stroke-width="1.300"/><path d="M2 8V5c0-2 2-3 5-3v6z" fill="#1d1d1d"/></svg>
        <span class="ml-[13px] w-[284px] shrink-0">Pick Shortest Path</span>
        <svg class="w-[16px] h-[20px]" viewBox="0 0 16 20"><rect x="1" y="1" width="14" height="18" rx="5" fill="none" stroke="#1d1d1d" stroke-width="1.300"/><rect x="6.500" y="4" width="3" height="6" fill="#1d1d1d"/></svg>
        <span class="ml-[13px] w-[284px] shrink-0">Dolly View</span>
        <svg class="w-[16px] h-[20px]" viewBox="0 0 16 20"><rect x="1" y="1" width="14" height="18" rx="5" fill="none" stroke="#1d1d1d" stroke-width="1.300"/><path d="M9 2c3 0 5 1 5 3v3H9z" fill="#1d1d1d"/></svg>
        <span class="ml-[14px] w-[219px] shrink-0">Duplicate or Extrude to Cursor</span>
        <svg class="w-[21px] h-[20px]" viewBox="0 0 21 20"><rect x="1" y="1" width="14" height="18" rx="5" fill="none" stroke="#1d1d1d" stroke-width="1.300"/><path d="M9 2c3 0 5 1 5 3v3H9z" fill="#1d1d1d"/><path d="M18 2v5M20 2v3" stroke="#1d1d1d"/></svg>
        <span class="ml-[8px]">Lasso Select</span>
        <span class="absolute right-[38px] text-[13.7px]">RetopoFlow | Verts:1/647 | Edges:0/1,299 | Faces:0/650 | Tris:1,286 | Mem: 392.3 MiB | v2.81.16</span>
        <span class="absolute right-[2px] top-[4px] font-['Open_Sans',sans-serif] text-[15px] text-white/70">https://blog.csdn.net/u010392759</span>
      </div>
    </div>

    <!-- desktop behind the window, right -->
    <div class="w-[8px] flex flex-col">
      <div class="h-[95px] bg-[#3a1113]"></div>
      <div class="flex-1 bg-[#f1f1f1]"></div>
    </div>
  </div>

  <!-- strip under the window, the text there is cut off in the shot -->
  <div class="h-[8px] flex">
    <div class="w-[1640px] bg-[#565656] pl-[10px]"><div class="w-[412px] mt-[1px] border-t-2 border-dotted border-white/60"></div></div>
    <div class="flex-1 bg-[#ece8df]"></div>
  </div>
</body>
</html>
